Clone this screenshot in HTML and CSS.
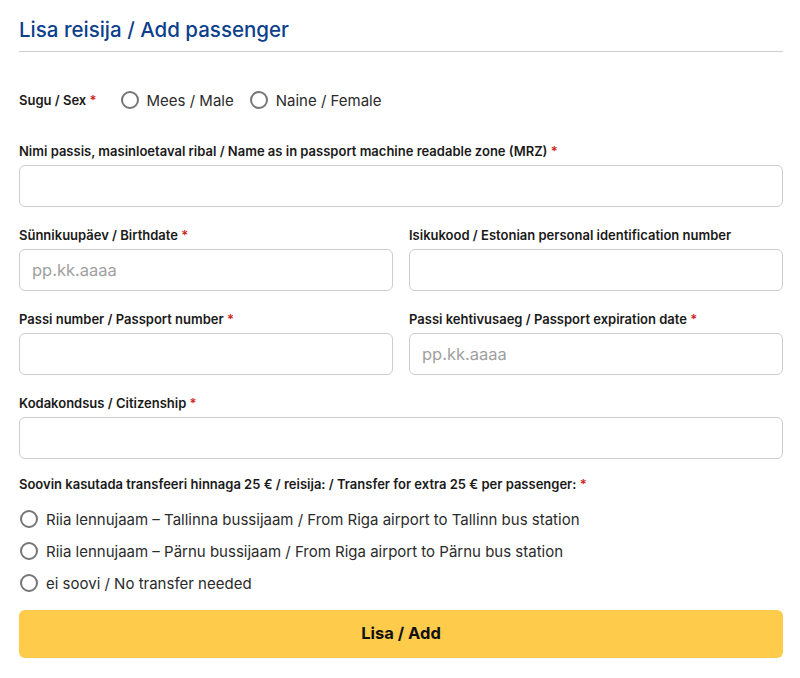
FILE: index.html
```html
<!DOCTYPE html>
<html lang="et">
<head>
<meta charset="utf-8">
<title>Lisa reisija / Add passenger</title>
<link rel="stylesheet" href="styles.css">
</head>
<body>
<form class="form">
  <h2 class="title">Lisa reisija / Add passenger</h2>

  <div class="sex-row">
    <span class="label">Sugu / Sex <span class="req">*</span></span>
    <label class="radio"><span class="dot"></span>Mees / Male</label>
    <label class="radio"><span class="dot"></span>Naine / Female</label>
  </div>

  <div class="fields">
    <div class="field full">
      <span class="label">Nimi passis, masinloetaval ribal / Name as in passport machine readable zone (MRZ) <span class="req">*</span></span>
      <div class="input"></div>
    </div>
    <div class="field">
      <span class="label">Sünnikuupäev / Birthdate <span class="req">*</span></span>
      <div class="input placeholder">pp.kk.aaaa</div>
    </div>
    <div class="field">
      <span class="label">Isikukood / Estonian personal identification number</span>
      <div class="input"></div>
    </div>
    <div class="field">
      <span class="label">Passi number / Passport number <span class="req">*</span></span>
      <div class="input"></div>
    </div>
    <div class="field">
      <span class="label">Passi kehtivusaeg / Passport expiration date <span class="req">*</span></span>
      <div class="input placeholder">pp.kk.aaaa</div>
    </div>
    <div class="field full">
      <span class="label">Kodakondsus / Citizenship <span class="req">*</span></span>
      <div class="input"></div>
    </div>
  </div>

  <div class="transfer">
    <span class="label">Soovin kasutada transfeeri hinnaga 25 € / reisija: / Transfer for extra 25 € per passenger: <span class="req">*</span></span>
    <div class="options">
      <label class="radio"><span class="dot"></span>Riia lennujaam – Tallinna bussijaam / From Riga airport to Tallinn bus station</label>
      <label class="radio"><span class="dot"></span>Riia lennujaam – Pärnu bussijaam / From Riga airport to Pärnu bus station</label>
      <label class="radio"><span class="dot"></span>ei soovi / No transfer needed</label>
    </div>
  </div>

  <div class="button">Lisa / Add</div>
</form>
</body>
</html>
```

FILE: styles.css
```css
* { box-sizing: border-box; }
html, body { margin: 0; padding: 0; background: #fff; }
body {
  font-family: Inter, "Noto Sans", sans-serif;
  color: #1f1f1f;
}
.form {
  width: 764px;
  margin-left: 19px;
  display: flex;
  flex-direction: column;
}
.title {
  margin: 0;
  padding: 15px 0 7px;
  font-family: Inter, "Noto Sans", sans-serif;
  font-weight: 500;
  font-size: 20.5px;
  line-height: 29px;
  color: #0d3f8c;
  border-bottom: 1px solid #cfcfcf;
}
.label {
  display: block;
  font-size: 13px;
  line-height: 16px;
  font-weight: 600;
  color: #1a1a1a;
}
.req { color: #d0231b; }
.sex-row {
  margin-top: 36px;
  height: 24px;
  display: flex;
  align-items: center;
}
.sex-row .label { margin-right: 24px; }
.sex-row .radio { margin-right: 16px; }
.radio {
  display: flex;
  align-items: center;
  font-size: 15px;
  color: #2b2b2b;
}
.dot {
  width: 18px;
  height: 18px;
  border: 2px solid #767676;
  border-radius: 50%;
  margin-right: 8px;
  flex: none;
}
.fields {
  margin-top: 31px;
  display: grid;
  grid-template-columns: 1fr 1fr;
  column-gap: 16px;
  row-gap: 20px;
}
.full { grid-column: 1 / -1; }
.field .label { margin-bottom: 6px; }
.input {
  height: 42px;
  border: 1px solid #cdcdcd;
  border-radius: 6px;
  padding: 0 12px;
  display: flex;
  align-items: center;
  font-size: 16.5px;
}
.placeholder { color: #a0a0a0; }
.transfer { margin-top: 17px; }
.options {
  margin-top: 11px;
  display: flex;
  flex-direction: column;
}
.options .radio { height: 32px; margin-left: 1px; }
.button {
  margin-top: 11px;
  height: 48px;
  border-radius: 6px;
  background: #fecb4b;
  display: flex;
  align-items: center;
  justify-content: center;
  padding-bottom: 2px;
  font-size: 16.5px;
  font-weight: 700;
  color: #111;
}
```
